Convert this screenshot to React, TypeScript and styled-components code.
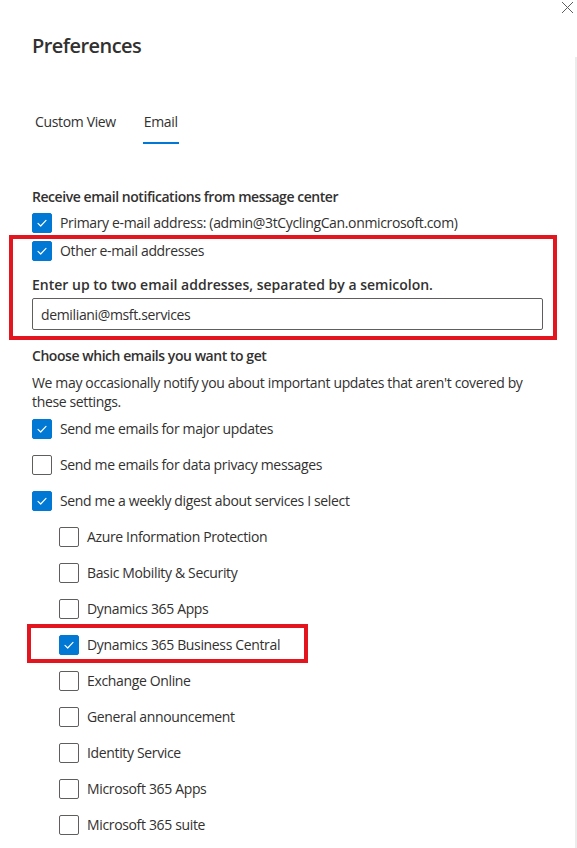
import { createGlobalStyle } from 'styled-components';
import styled from 'styled-components';

const GlobalStyle = createGlobalStyle`
  html, body {
    margin: 0;
    padding: 0;
    background: #ffffff;
  }
  body {
    font-family: 'Segoe UI', 'Open Sans', 'Noto Sans', sans-serif;
    color: #323130;
    letter-spacing: -0.35px;
    -webkit-font-smoothing: antialiased;
  }
`;

const Panel = styled.div`
  display: flex;
  width: 577px;
  height: 848px;
  overflow: hidden;
  background: #ffffff;
`;

const Content = styled.div`
  flex: 1;
  display: flex;
  flex-direction: column;
  padding-left: 32px;
  padding-right: 1px;
`;

const ScrollTrack = styled.div`
  width: 2px;
  margin-top: 57px;
  background: #ececec;
`;

const CloseRow = styled.div`
  display: flex;
  justify-content: flex-end;
  height: 14px;
`;

const CloseButton = styled.button`
  border: none;
  background: transparent;
  padding: 0;
  margin-top: 1px;
  width: 13px;
  height: 13px;
  display: flex;
  cursor: pointer;
`;

const Title = styled.h1`
  margin: 18px 0 0;
  font-size: 20px;
  line-height: 28px;
  font-weight: 600;
  letter-spacing: -0.55px;
  color: #323130;
`;

const TabBar = styled.div`
  display: flex;
  gap: 26px;
  margin-top: 52px;
  padding-left: 2px;
`;

const Tab = styled.div<{ $active?: boolean }>`
  position: relative;
  font-size: 14px;
  line-height: 20px;
  padding: 0 1px 12px;
  color: #323130;
  &::after {
    content: '';
    position: absolute;
    left: 0;
    right: 0;
    bottom: 0;
    height: 2px;
    background: ${(p) => (p.$active ? '#0078d4' : 'transparent')};
  }
`;

const Heading = styled.div<{ $top: number }>`
  margin-top: ${(p) => p.$top}px;
  font-size: 14px;
  line-height: 20px;
  font-weight: 600;
  letter-spacing: -0.45px;
  color: #323130;
`;

const FieldLabel = styled.div`
  margin-top: 14px;
  font-size: 14px;
  line-height: 20px;
  font-weight: 600;
  letter-spacing: 0;
  color: #323130;
`;

const Description = styled.p`
  margin: 7px 0 0;
  max-width: 505px;
  font-size: 14px;
  line-height: 19px;
  color: #323130;
`;

const Row = styled.label<{ $top?: number }>`
  display: flex;
  align-items: center;
  height: 20px;
  margin-top: ${(p) => p.$top ?? 0}px;
  font-size: 14px;
  line-height: 20px;
  color: #323130;
  cursor: pointer;
`;

const Box = styled.span<{ $checked?: boolean }>`
  flex: none;
  display: flex;
  align-items: center;
  justify-content: center;
  box-sizing: border-box;
  width: 20px;
  height: 20px;
  border-radius: 2px;
  border: 1px solid ${(p) => (p.$checked ? '#0078d4' : '#605e5c')};
  background: ${(p) => (p.$checked ? '#0078d4' : '#ffffff')};
  margin-right: 8px;
`;

const Highlight = styled.div`
  box-sizing: border-box;
  width: 548px;
  margin: 2px 0 0 -23px;
  padding: 2px 0 6px 19px;
  border: 4px solid #e3161f;
`;

const InlineHighlight = styled.div`
  align-self: flex-start;
  margin: -11px 0 -8px -32px;
  padding: 7px 24px 4px 28px;
  border: 4px solid #e3161f;
`;

const TextInput = styled.input`
  display: block;
  box-sizing: border-box;
  width: 511px;
  height: 32px;
  margin-top: 3px;
  padding: 0 8px;
  border: 1px solid #605e5c;
  border-radius: 2px;
  font-family: inherit;
  font-size: 14px;
  letter-spacing: -0.35px;
  color: #323130;
  outline: none;
`;

const SubList = styled.div`
  display: flex;
  flex-direction: column;
  gap: 16px;
  margin-top: 16px;
  padding-left: 27px;
`;

const Check = () => (
  <svg width="12" height="12" viewBox="0 0 12 12" fill="none">
    <path d="M2 6.3 L4.7 9 L10 3.4" stroke="#ffffff" strokeWidth="1.2" strokeLinecap="round" strokeLinejoin="round" />
  </svg>
);

const Checkbox: React.FC<{ checked?: boolean; label: string; top?: number }> = ({ checked, label, top }) => (
  <Row $top={top}>
    <Box $checked={checked}>{checked && <Check />}</Box>
    {label}
  </Row>
);

const services = [
  'Azure Information Protection',
  'Basic Mobility & Security',
  'Dynamics 365 Apps',
  'Dynamics 365 Business Central',
  'Exchange Online',
  'General announcement',
  'Identity Service',
  'Microsoft 365 Apps',
  'Microsoft 365 suite',
];

const App = () => {
  return (
    <>
      <GlobalStyle />
      <Panel>
        <Content>
          <CloseRow>
            <CloseButton aria-label="Close">
              <svg width="13" height="13" viewBox="0 0 13 13">
                <path d="M1 1 L12 12 M12 1 L1 12" stroke="#605e5c" strokeWidth="1" />
              </svg>
            </CloseButton>
          </CloseRow>
          <Title>Preferences</Title>

          <TabBar>
            <Tab>Custom View</Tab>
            <Tab $active>Email</Tab>
          </TabBar>

          <Heading $top={43}>Receive email notifications from message center</Heading>
          <Checkbox checked top={6} label="Primary e-mail address: (admin@3tCyclingCan.onmicrosoft.com)" />
          <Highlight>
            <Checkbox checked label="Other e-mail addresses" />
            <FieldLabel>Enter up to two email addresses, separated by a semicolon.</FieldLabel>
            <TextInput defaultValue="demiliani@msft.services" />
          </Highlight>

          <Heading $top={6}>Choose which emails you want to get</Heading>
          <Description>
            We may occasionally notify you about important updates that aren't covered by these settings.
          </Description>
          <Checkbox checked top={8} label="Send me emails for major updates" />
          <Checkbox top={16} label="Send me emails for data privacy messages" />
          <Checkbox checked top={16} label="Send me a weekly digest about services I select" />

          <SubList>
            {services.map((name) =>
              name === 'Dynamics 365 Business Central' ? (
                <InlineHighlight key={name}>
                  <Checkbox checked label={name} />
                </InlineHighlight>
              ) : (
                <Checkbox key={name} label={name} />
              ),
            )}
          </SubList>
        </Content>
        <ScrollTrack />
      </Panel>
    </>
  );
};

export default App;
